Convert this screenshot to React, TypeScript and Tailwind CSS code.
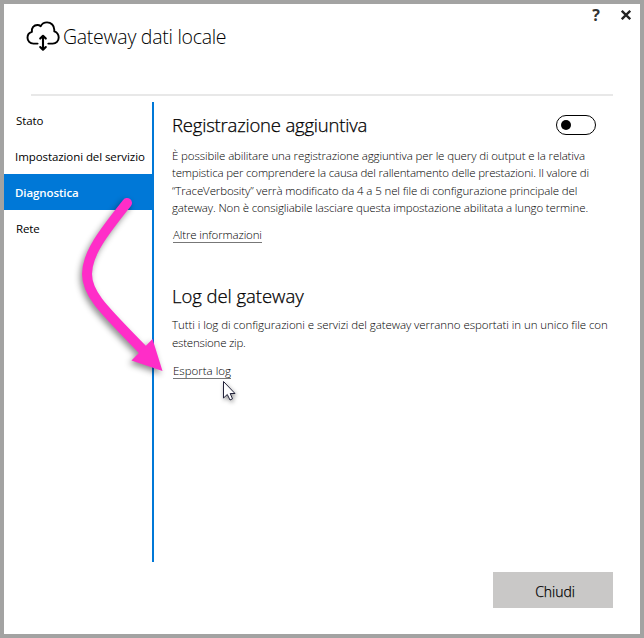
import React from "react";

type Line = { text: string; className: string };

const intro: Line[] = [
  { text: "È possibile abilitare una registrazione aggiuntiva per le query di output e la relativa", className: "tracking-[-0.12px]" },
  { text: "tempistica per comprendere la causa del rallentamento delle prestazioni. Il valore di", className: "tracking-[-0.18px]" },
  { text: "“TraceVerbosity” verrà modificato da 4 a 5 nel file di configurazione principale del", className: "tracking-[-0.12px]" },
  { text: "gateway. Non è consigliabile lasciare questa impostazione abilitata a lungo termine.", className: "tracking-[-0.14px]" },
];

const logs: Line[] = [
  { text: "Tutti i log di configurazioni e servizi del gateway verranno esportati in un unico file con", className: "tracking-[-0.07px]" },
  { text: "estensione zip.", className: "tracking-[-0.22px]" },
];

function Paragraph({ lines }: { lines: Line[] }) {
  return (
    <p className="text-[11.5px] leading-[17.33px] font-light text-black">
      {lines.map((l) => (
        <span key={l.text} className={`block whitespace-nowrap ${l.className}`}>{l.text}</span>
      ))}
    </p>
  );
}

function CloudIcon() {
  return (
    <svg className="h-[32px] w-[36px] shrink-0" viewBox="0 0 36 32" fill="none" stroke="#000" strokeWidth="1.9" strokeLinecap="round" strokeLinejoin="round">
      <path d="M12.600 23.600H8.400C4.900 23.600 2.500 20.900 2.500 17.800c0-3 2-5.300 4.400-5.900C6.300 7.800 8.900 5 12.400 5c1.300 0 2.400.4 3.300 1.200C17 3.700 19.300 2.400 22 2.400c4.200 0 7.300 3.200 7.300 7.400v1.600c2.600.9 4.400 3.300 4.400 6.200 0 3.300-2.500 6-6 6h-4.400" />
      <path d="M18 15.800v14M15.200 18.600L18 15.800l2.800 2.800M15.200 27L18 29.800l2.800-2.800" strokeWidth="2.100" />
    </svg>
  );
}

export default function App() {
  return (
    <div className="relative flex h-[638px] w-[644px] flex-col overflow-hidden border-4 border-[#a3a3a2] bg-white font-['Open_Sans','Noto_Sans',sans-serif] text-black">
      <header className="flex h-[90px] shrink-0 justify-between">
        <div className="flex pt-[16px] pl-[21px]">
          <CloudIcon />
          <h1 className="ml-[2px] text-[19.500px] leading-[33px] font-light tracking-[-0.28px] whitespace-nowrap">Gateway dati locale</h1>
        </div>
        <div className="flex h-[22px] items-center gap-[21px] pr-[9px]">
          <span className="text-[16px] leading-[22px] font-bold text-[#333]">?</span>
          <svg className="h-[10px] w-[10px]" viewBox="0 0 10 10" stroke="#222" strokeWidth="2.3"><path d="M.8.8l8.400 8.400M9.200.8L.8 9.200" /></svg>
        </div>
      </header>
      <div className="mr-[27px] ml-[27px] h-[2px] shrink-0 bg-[#e8e8e8]" />
      <main className="mt-[6px] flex h-[460px] shrink-0">
        <nav className="flex w-[150px] shrink-0 flex-col border-r-2 border-[#0078d7] text-[11.500px] whitespace-nowrap">
          <a className="flex h-[36px] items-center pt-[2px] pl-[12px] tracking-[-0.1px]">Stato</a>
          <a className="flex h-[36px] items-center pt-[2px] pl-[11px] tracking-[-0.08px]">Impostazioni del servizio</a>
          <a className="flex h-[36px] items-center bg-[#0078d7] pt-[1px] pl-[11px] font-semibold tracking-[-0.1px] text-white">Diagnostica</a>
          <a className="flex h-[36px] items-center pt-[2px] pl-[12px] tracking-[-0.1px]">Rete</a>
        </nav>
        <section className="flex flex-1 flex-col items-start pl-[18px]">
          <div className="flex h-[46px] w-[424px] items-center justify-between">
            <h2 className="text-[18.500px] font-light tracking-[-0.2px] whitespace-nowrap [-webkit-text-stroke:0.25px_black]">Registrazione aggiuntiva</h2>
            <div className="flex h-5 w-10 items-center rounded-full border border-black pl-[4px]">
              <span className="size-[10px] rounded-full bg-black" />
            </div>
          </div>
          <div className="-mt-px"><Paragraph lines={intro} /></div>
          <a className="mt-[11px] ml-[1px] border-b border-[#777] text-[11.500px] leading-[15px] font-light tracking-[-0.15px]">Altre informazioni</a>
          <h2 className="mt-[40px] text-[18.500px] leading-[26px] font-light tracking-[-0.05px] [-webkit-text-stroke:0.25px_black]">Log del gateway</h2>
          <div className="mt-[7px]"><Paragraph lines={logs} /></div>
          <a className="mt-[12px] ml-[1px] border-b border-[#777] text-[11.500px] leading-[15px] font-light">Esporta log</a>
        </section>
      </main>
      <button className="mt-[10px] ml-[489px] flex h-[36px] w-[120px] shrink-0 items-center justify-center bg-[#c9c8c7] pt-[3px] pl-[4px] text-[14px] font-light tracking-[-0.05px] [-webkit-text-stroke:0.25px_black]">Chiudi</button>

      <svg className="pointer-events-none absolute -top-1 -left-1 h-[638px] w-[644px]" viewBox="0 0 644 638">
        <g className="drop-shadow-[-2px_3px_3px_rgba(0,0,0,0.45)]">
          <path d="M127 203C103 233 87 254 87 274C87 294 103 309 143 350" fill="none" stroke="#ff2dc8" strokeWidth="10" strokeLinecap="round" />
          <path d="M152.500 339L162.500 371L131.500 360.500Z" fill="#ff2dc8" />
        </g>
        <path className="drop-shadow-[1px_2px_2px_rgba(0,0,0,0.4)]" d="M223.500 381.500V398L227.300 394.500L230 400L232.500 398.800L230.200 393.500H235Z" fill="#fff" stroke="#22223a" strokeWidth="1" />
      </svg>
    </div>
  );
}
